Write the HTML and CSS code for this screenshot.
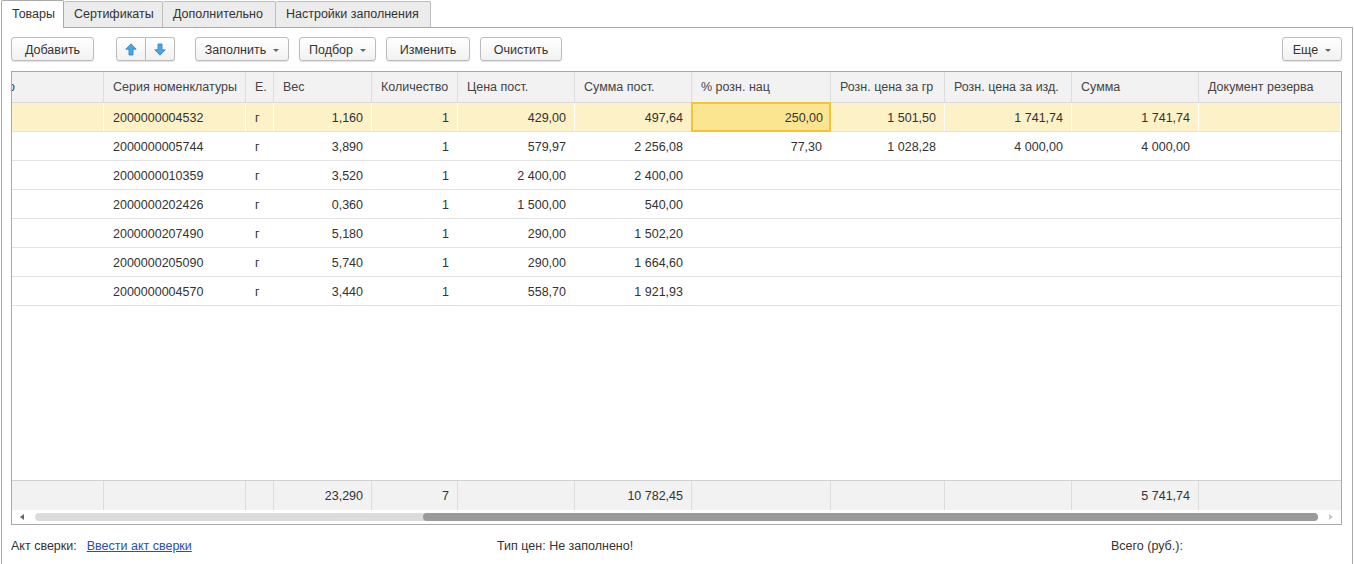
FILE: index.html
```html
<!DOCTYPE html>
<html lang="ru">
<head>
<meta charset="utf-8">
<link rel="stylesheet" href="styles.css">
</head>
<body>
<div class="page">
  <div class="tabs">
    <div class="tab active">Товары</div>
    <div class="tab">Сертификаты</div>
    <div class="tab">Дополнительно</div>
    <div class="tab">Настройки заполнения</div>
  </div>
  <div class="panel">
    <div class="toolbar">
      <button class="btn w-add">Добавить</button>
      <div class="btn-group">
        <button class="btn icon-btn"><svg width="12" height="13" viewBox="0 0 12 13"><path d="M6 0.8 L11.2 6.2 H8 V12 H4 V6.2 H0.8 Z" fill="#4aa6e8" stroke="#2f7fc4" stroke-width="0.8" stroke-linejoin="round"/></svg></button>
        <button class="btn icon-btn"><svg width="12" height="13" viewBox="0 0 12 13"><path d="M6 12.2 L11.2 6.8 H8 V1 H4 V6.8 H0.8 Z" fill="#4aa6e8" stroke="#2f7fc4" stroke-width="0.8" stroke-linejoin="round"/></svg></button>
      </div>
      <button class="btn dd w-fill">Заполнить<span class="caret"></span></button>
      <button class="btn dd w-pick">Подбор<span class="caret"></span></button>
      <button class="btn w-edit">Изменить</button>
      <button class="btn w-clear">Очистить</button>
      <div class="spacer"></div>
      <button class="btn dd w-more">Еще<span class="caret"></span></button>
    </div>

    <div class="grid">
      <div class="row head">
        <div class="c clip"><span class="cut">о</span></div>
        <div class="c">Серия номенклатуры</div>
        <div class="c">Е.</div>
        <div class="c">Вес</div>
        <div class="c">Количество</div>
        <div class="c">Цена пост.</div>
        <div class="c">Сумма пост.</div>
        <div class="c">% розн. нац</div>
        <div class="c">Розн. цена за гр</div>
        <div class="c">Розн. цена за изд.</div>
        <div class="c">Сумма</div>
        <div class="c">Документ резерва</div>
      </div>
      <div class="body">
        <div class="row data selected">
          <div class="c"></div>
          <div class="c">2000000004532</div>
          <div class="c">г</div>
          <div class="c r">1,160</div>
          <div class="c r">1</div>
          <div class="c r">429,00</div>
          <div class="c r">497,64</div>
          <div class="c r current">250,00</div>
          <div class="c r">1 501,50</div>
          <div class="c r">1 741,74</div>
          <div class="c r">1 741,74</div>
          <div class="c"></div>
        </div>
        <div class="row data">
          <div class="c"></div>
          <div class="c">2000000005744</div>
          <div class="c">г</div>
          <div class="c r">3,890</div>
          <div class="c r">1</div>
          <div class="c r">579,97</div>
          <div class="c r">2 256,08</div>
          <div class="c r">77,30</div>
          <div class="c r">1 028,28</div>
          <div class="c r">4 000,00</div>
          <div class="c r">4 000,00</div>
          <div class="c"></div>
        </div>
        <div class="row data">
          <div class="c"></div>
          <div class="c">2000000010359</div>
          <div class="c">г</div>
          <div class="c r">3,520</div>
          <div class="c r">1</div>
          <div class="c r">2 400,00</div>
          <div class="c r">2 400,00</div>
          <div class="c"></div><div class="c"></div><div class="c"></div><div class="c"></div><div class="c"></div>
        </div>
        <div class="row data">
          <div class="c"></div>
          <div class="c">2000000202426</div>
          <div class="c">г</div>
          <div class="c r">0,360</div>
          <div class="c r">1</div>
          <div class="c r">1 500,00</div>
          <div class="c r">540,00</div>
          <div class="c"></div><div class="c"></div><div class="c"></div><div class="c"></div><div class="c"></div>
        </div>
        <div class="row data">
          <div class="c"></div>
          <div class="c">2000000207490</div>
          <div class="c">г</div>
          <div class="c r">5,180</div>
          <div class="c r">1</div>
          <div class="c r">290,00</div>
          <div class="c r">1 502,20</div>
          <div class="c"></div><div class="c"></div><div class="c"></div><div class="c"></div><div class="c"></div>
        </div>
        <div class="row data">
          <div class="c"></div>
          <div class="c">2000000205090</div>
          <div class="c">г</div>
          <div class="c r">5,740</div>
          <div class="c r">1</div>
          <div class="c r">290,00</div>
          <div class="c r">1 664,60</div>
          <div class="c"></div><div class="c"></div><div class="c"></div><div class="c"></div><div class="c"></div>
        </div>
        <div class="row data">
          <div class="c"></div>
          <div class="c">2000000004570</div>
          <div class="c">г</div>
          <div class="c r">3,440</div>
          <div class="c r">1</div>
          <div class="c r">558,70</div>
          <div class="c r">1 921,93</div>
          <div class="c"></div><div class="c"></div><div class="c"></div><div class="c"></div><div class="c"></div>
        </div>
      </div>
      <div class="row foot">
        <div class="c"></div>
        <div class="c"></div>
        <div class="c"></div>
        <div class="c r">23,290</div>
        <div class="c r">7</div>
        <div class="c"></div>
        <div class="c r">10 782,45</div>
        <div class="c"></div>
        <div class="c"></div>
        <div class="c"></div>
        <div class="c r">5 741,74</div>
        <div class="c"></div>
      </div>
      <div class="hscroll">
        <span class="arrow left"></span>
        <div class="track"><div class="thumb"></div></div>
        <span class="arrow right"></span>
      </div>
    </div>

    <div class="status">
      <div class="st-a">Акт сверки:<a class="link" href="#">Ввести акт сверки</a></div>
      <div class="st-b">Тип цен: Не заполнено!</div>
      <div class="st-c">Всего (руб.):</div>
    </div>
  </div>
</div>
</body>
</html>
```

FILE: styles.css
```css
* { box-sizing: border-box; }
html, body { margin: 0; padding: 0; background: #fff; }
body {
  font-family: "Liberation Sans", Arial, sans-serif;
  font-size: 12.5px;
  color: #333;
}
.page { padding-left: 1px; width: 1354px; height: 564px; overflow: hidden; }

/* tabs */
.tabs { display: flex; height: 27px; align-items: flex-end; }
.tab {
  height: 26px;
  line-height: 25px;
  padding: 0 10px;
  background: #ececec;
  border: 1px solid #bdbdbd;
  border-bottom: none;
  border-left: none;
  border-radius: 2px 2px 0 0;
  color: #333;
}
.tab.active {
  background: #fff;
  height: 28px;
  margin-bottom: -1px;
  border-left: 1px solid #a9a9a9;
  border-color: #a9a9a9;
  position: relative;
  z-index: 1;
  line-height: 27px;
}
.tab:nth-child(1) { width: 63px; }
.tab:nth-child(2) { width: 99px; }
.tab:nth-child(3) { width: 113px; }
.tab:nth-child(4) { width: 155px; }

.panel {
  width: 1352px;
  height: 537px;
  border: 1px solid #a9a9a9;
  border-bottom: none;
  padding: 9px 10px 0 9px;
}

/* toolbar */
.toolbar { display: flex; align-items: center; height: 24px; margin-bottom: 10px; }
.btn {
  height: 24px;
  font-family: inherit;
  font-size: 12.5px;
  color: #333;
  background: linear-gradient(#ffffff, #f1f1f1);
  border: 1px solid #bcbcbc;
  border-radius: 3px;
  box-shadow: 0 1px 1px rgba(0,0,0,0.12);
  padding: 1px 0 0 0;
  margin: 0 10px 0 0;
  display: inline-flex;
  align-items: center;
  justify-content: center;
}
.w-add { width: 83px; margin-right: 22px; }
.w-fill { width: 94px; }
.w-pick { width: 77px; }
.w-edit { width: 84px; }
.w-clear { width: 82px; }
.w-more { width: 60px; margin-right: 0; }
.btn-group { display: flex; margin-right: 20px; }
.icon-btn { width: 30px; margin: 0; padding: 0; }
.btn-group .icon-btn:first-child { border-radius: 3px 0 0 3px; }
.btn-group .icon-btn:last-child { border-radius: 0 3px 3px 0; border-left: none; width: 29px; }
.caret {
  display: inline-block;
  width: 0; height: 0;
  border-left: 3px solid transparent;
  border-right: 3px solid transparent;
  border-top: 3px solid #666;
  margin-left: 7px;
  margin-top: 1px;
}
.spacer { flex: 1; }

/* grid */
.grid {
  width: 1331px;
  height: 454px;
  border: 1px solid #a9a9a9;
  display: flex;
  flex-direction: column;
  background: #fff;
}
.row {
  display: grid;
  grid-template-columns: 92px 142px 28px 98px 86px 117px 117px 139px 114px 127px 127px 142px;
}
.c {
  padding: 0 8px 0 8px;
  white-space: nowrap;
  overflow: hidden;
  display: flex;
  align-items: center;
}
.c.r { justify-content: flex-end; }

.head { height: 31px; background: #f2f2f2; border-bottom: 1px solid #d9d9d9; color: #444; }
.head .c { border-right: 1px solid #dcdcdc; padding-left: 9px; padding-bottom: 1px; }
.head .c:last-child { border-right: none; }
.head .clip { padding: 0; }
.cut { margin-left: -4px; }

.body { flex: 1; }
.data { height: 29px; border-bottom: 1px solid #e3e3e3; }
.data .c { border-right: 1px solid transparent; padding-left: 9px; padding-top: 1px; }
.data.selected { background: #fcf1c7; }
.data.selected .c { border-right-color: #fff; }
.data .c.current {
  background: #fce590;
  border: 2px solid #f4c437;
  margin: -1px 0 -1px -1px;
  padding-right: 6px;
}

.foot { height: 30px; background: #f2f2f2; border-top: 1px solid #d0d0d0; }
.foot .c { border-right: 1px solid #dcdcdc; }
.foot .c:last-child { border-right: none; }

.hscroll { height: 14px; display: flex; align-items: center; padding: 0 8px 0 8px; }
.arrow { width: 0; height: 0; border-top: 3px solid transparent; border-bottom: 3px solid transparent; }
.arrow.left { border-right: 4px solid #666; margin-right: 11px; }
.arrow.right { border-left: 4px solid #c8c8c8; margin-left: 11px; }
.track {
  flex: 1;
  height: 8px;
  border-radius: 4px;
  background: #dcdcdc;
  display: flex;
  justify-content: flex-start;
}
.thumb {
  margin-left: 388px;
  width: 895px;
  height: 8px;
  border-radius: 4px;
  background: #9b9b9b;
}

/* status */
.status {
  display: grid;
  grid-template-columns: 486px 614px 1fr;
  margin-top: 14px;
  line-height: 15px;
  color: #333;
}
.link { color: #2550b5; text-decoration: underline; margin-left: 10px; }
```
